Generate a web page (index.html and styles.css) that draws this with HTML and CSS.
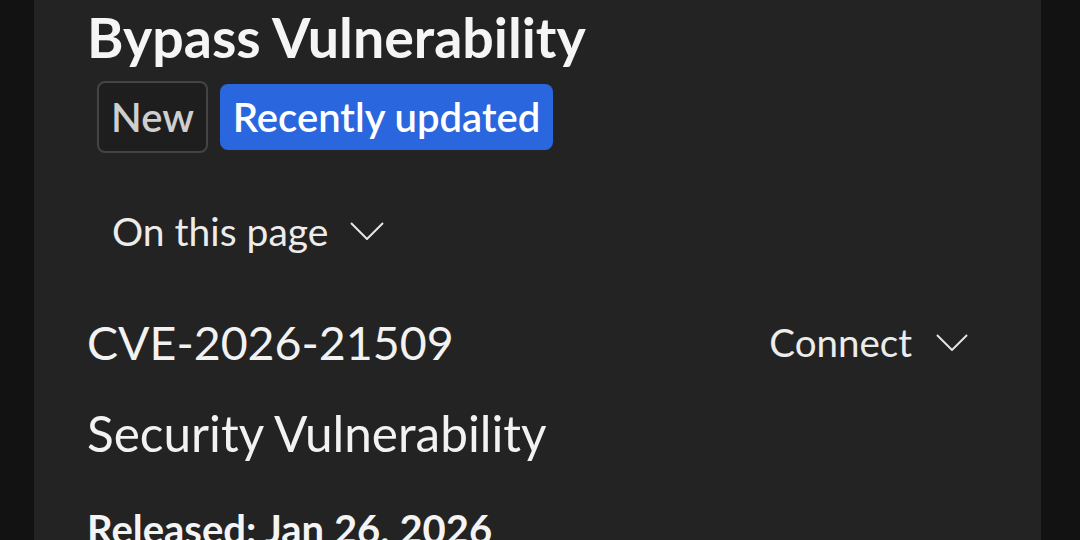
FILE: index.html
```html
<!DOCTYPE html>
<html lang="en">
<head>
<meta charset="utf-8">
<title>CVE-2026-21509</title>
<link rel="stylesheet" href="styles.css">
</head>
<body>
<div class="page">
  <main class="panel">
    <h1 class="title">Bypass Vulnerability</h1>
    <div class="badges">
      <span class="badge badge-new">New</span>
      <span class="badge badge-updated">Recently updated</span>
    </div>
    <div class="toc">
      <span class="toc-label">On this page</span>
      <svg class="chev" viewBox="0 0 34 18" width="34" height="18" aria-hidden="true"><polyline points="1,1 17,17 33,1" fill="none" stroke="#e6e6e6" stroke-width="2"/></svg>
    </div>
    <div class="cve-row">
      <span class="cve">CVE-2026-21509</span>
      <span class="connect">Connect
        <svg class="chev" viewBox="0 0 34 18" width="32" height="17" aria-hidden="true"><polyline points="1,1 17,17 33,1" fill="none" stroke="#e6e6e6" stroke-width="2"/></svg>
      </span>
    </div>
    <div class="subtitle">Security Vulnerability</div>
    <div class="released">Released: Jan 26, 2026</div>
  </main>
</div>
</body>
</html>
```
FILE: styles.css
```css
html, body {
  margin: 0;
  padding: 0;
  background: #121212;
  height: 100%;
  overflow: hidden;
}
.page {
  display: flex;
  padding-left: 34px;
  height: 100%;
}
.panel {
  width: 1007px;
  background: #232323;
  color: #f2f2f2;
  font-family: Lato, "Open Sans", sans-serif;
  padding: 7px 73px 0 53px;
  box-sizing: border-box;
  display: flex;
  flex-direction: column;
}
.title {
  margin: 0;
  font-size: 55.5px;
  line-height: 60px;
  font-weight: 700;
  color: #f5f5f5;
}
.badges {
  display: flex;
  align-items: center;
  gap: 12px;
  height: 72px;
  margin: 14px 0 0 10px;
}
.badge {
  display: inline-flex;
  align-items: center;
  justify-content: center;
  box-sizing: border-box;
  border-radius: 8px;
  font-size: 40px;
  font-weight: 600;
}
.badge-new {
  width: 111px;
  height: 72px;
  border: 2px solid #444;
  background: #1e1e1e;
  color: #cfcfcf;
}
.badge-updated {
  width: 333px;
  height: 66px;
  background: #2a66de;
  color: #ffffff;
}
.toc {
  display: flex;
  align-items: center;
  gap: 22px;
  height: 44px;
  margin: 56px 0 0 25px;
  font-size: 39px;
  line-height: 44px;
  color: #ececec;
}
.cve-row {
  display: flex;
  justify-content: space-between;
  align-items: center;
  height: 56px;
  margin-top: 61px;
}
.cve {
  font-size: 46.5px;
  line-height: 56px;
  color: #f2f2f2;
}
.connect {
  display: inline-flex;
  align-items: center;
  gap: 24px;
  font-size: 38.5px;
  color: #ececec;
}
.subtitle {
  margin-top: 33px;
  font-size: 49.5px;
  line-height: 60px;
  color: #f2f2f2;
}
.released {
  margin-top: 44px;
  font-size: 40px;
  line-height: 44px;
  font-weight: 700;
  color: #f4f4f4;
}
```
